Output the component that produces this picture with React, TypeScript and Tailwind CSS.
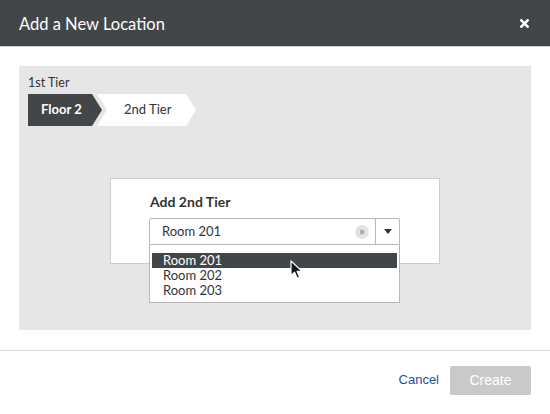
import { useState } from "react";

const rooms = ["Room 201", "Room 202", "Room 203"];

function CloseIcon() {
	return (
		<svg width="9" height="9" viewBox="0 0 10 10" className="block">
			<path d="M1.5 1.5 L8.5 8.5 M8.5 1.5 L1.5 8.5" stroke="#fff" strokeWidth="2.8" strokeLinecap="square" />
		</svg>
	);
}

function Cursor() {
	return (
		<svg width="14" height="20" viewBox="0 0 14 20" className="absolute left-[141px] top-[42px]">
			<path
				d="M1 1 L1 15.5 L4.6 12.2 L7.2 18.2 L9.6 17.2 L7.1 11.4 L12 11.4 Z"
				fill="#111"
				stroke="#fff"
				strokeWidth="1.2"
				strokeLinejoin="round"
			/>
		</svg>
	);
}

export default function App() {
	const [selected] = useState("Room 201");

	return (
		<div className="w-[550px] h-[414px] bg-white flex flex-col font-['Lato','Noto_Sans',sans-serif] overflow-hidden">
			{/* header */}
			<div className="h-[47px] shrink-0 bg-[#434649] border-b border-[#cfd1d2] flex items-center justify-between pl-[19px] pr-[21px]">
				<h1 className="text-white text-[16.5px] leading-none pt-[3px]">Add a New Location</h1>
				<CloseIcon />
			</div>

			{/* body */}
			<div className="px-[19px] pt-[19px] pb-[20px] border-b border-[#d9d9d9]">
				<div className="h-[264px] bg-[#e6e6e6] pl-[9px] pt-[9px] flex flex-col">
					<div className="text-[12.5px] leading-[15px] text-[#333]">1st Tier</div>
					<div className="flex mt-[4px] h-[32px]">
						<div className="w-[74px] bg-[#434649] text-white font-bold text-[13px] flex items-center pl-[13px] [clip-path:polygon(0_0,64px_0,74px_50%,64px_100%,0_100%)]">
							Floor 2
						</div>
						<div className="w-[99px] -ml-[5px] bg-white text-[#333] text-[13px] flex items-center pl-[27px] [clip-path:polygon(0_0,89px_0,99px_50%,89px_100%,0_100%,10px_50%)]">
							2nd Tier
						</div>
					</div>

					<div className="self-center -ml-[9px] mt-[52px] w-[330px] h-[86px] bg-white border border-[#cccccc] pl-[39px] pt-[14px]">
						<div className="font-bold text-[14px] leading-[18px] text-[#333]">Add 2nd Tier</div>
						<div className="relative mt-[7px] -ml-[1px] w-[251px]">
							<div className="h-[27px] border border-[#b8b8b8] rounded-t-[2px] flex items-center">
								<span className="flex-1 pl-[12px] text-[13px] text-[#333]">{selected}</span>
								<span className="w-[14px] h-[14px] rounded-full bg-[#e2e2e2] flex items-center justify-center mr-[6px]">
									<svg width="6" height="6" viewBox="0 0 6 6">
										<path d="M1 1 L5 5 M5 1 L1 5" stroke="#999" strokeWidth="1.3" />
									</svg>
								</span>
								<span className="h-full w-[24px] border-l border-[#b8b8b8] flex items-center justify-center">
									<svg width="8" height="5" viewBox="0 0 8 5">
										<path d="M0 0 L8 0 L4 5 Z" fill="#333" />
									</svg>
								</span>
							</div>
							<ul className="absolute left-0 top-[27px] w-[251px] h-[58px] bg-white border border-[#b8b8b8] border-t-0 px-[2px] pt-[8px]">
								{rooms.map((r, i) => (
									<li
										key={r}
										className={
											i === 0
												? "h-[15px] leading-[15px] pl-[11px] text-[13px] bg-[#434649] text-white"
												: "h-[14.5px] leading-[14.5px] pl-[11px] text-[13px] text-[#333]"
										}
									>
										{r}
									</li>
								))}
							</ul>
							<Cursor />
						</div>
					</div>
				</div>
			</div>

			{/* footer */}
			<div className="flex-1 flex items-center justify-end gap-[11px] pr-[19px] pb-[5px] font-['Liberation_Sans',Arial,sans-serif]">
				<button className="text-[13px] text-[#1f4f9e]">Cancel</button>
				<button className="w-[81px] h-[29px] rounded-[2px] bg-[#c9c9c9] text-white text-[14px]">Create</button>
			</div>
		</div>
	);
}
